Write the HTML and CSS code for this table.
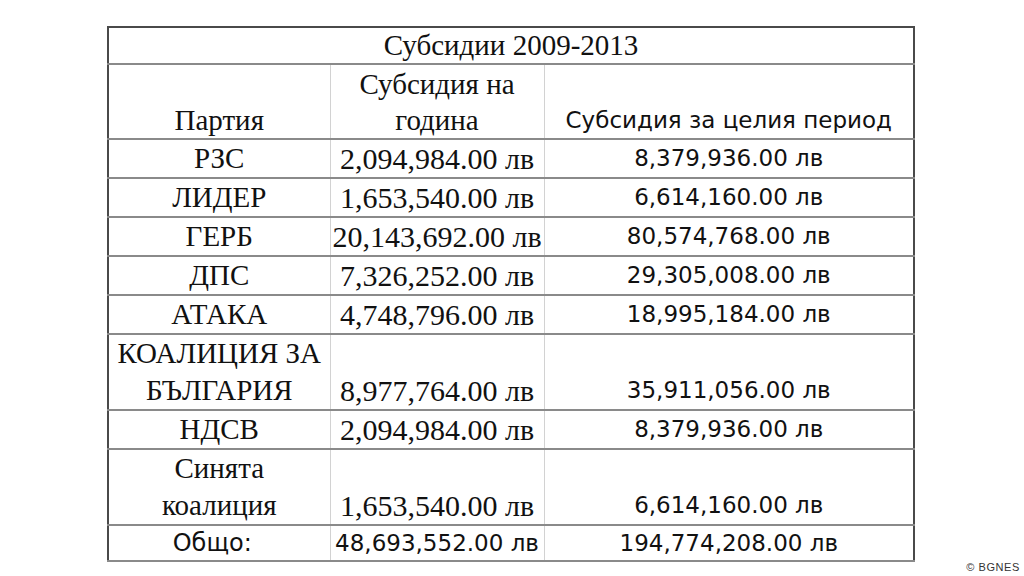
FILE: index.html
```html
<!DOCTYPE html>
<html lang="bg">
<head>
<meta charset="utf-8">
<title>Субсидии 2009-2013</title>
<link rel="stylesheet" href="styles.css">
</head>
<body>
<main class="page">
  <table class="subs">
    <colgroup>
      <col class="c1"><col class="c2"><col class="c3">
    </colgroup>
    <tr class="title-row"><td colspan="3" class="serif">Субсидии 2009-2013</td></tr>
    <tr class="header">
      <td class="serif">Партия</td>
      <td class="serif">Субсидия на<br>година</td>
      <td class="sans">Субсидия за целия период</td>
    </tr>
    <tr class="single"><td class="serif">РЗС</td><td class="serif num">2,094,984.00 лв</td><td class="sans">8,379,936.00 лв</td></tr>
    <tr class="single"><td class="serif">ЛИДЕР</td><td class="serif num">1,653,540.00 лв</td><td class="sans">6,614,160.00 лв</td></tr>
    <tr class="single"><td class="serif">ГЕРБ</td><td class="serif num">20,143,692.00 лв</td><td class="sans">80,574,768.00 лв</td></tr>
    <tr class="single"><td class="serif">ДПС</td><td class="serif num">7,326,252.00 лв</td><td class="sans">29,305,008.00 лв</td></tr>
    <tr class="single"><td class="serif">АТАКА</td><td class="serif num">4,748,796.00 лв</td><td class="sans">18,995,184.00 лв</td></tr>
    <tr class="double"><td class="serif">КОАЛИЦИЯ ЗА<br>БЪЛГАРИЯ</td><td class="serif num">8,977,764.00 лв</td><td class="sans">35,911,056.00 лв</td></tr>
    <tr class="single"><td class="serif">НДСВ</td><td class="serif num">2,094,984.00 лв</td><td class="sans">8,379,936.00 лв</td></tr>
    <tr class="double"><td class="serif">Синята<br>коалиция</td><td class="serif num">1,653,540.00 лв</td><td class="sans">6,614,160.00 лв</td></tr>
    <tr class="total"><td class="sans label">Общо:</td><td class="sans">48,693,552.00 лв</td><td class="sans">194,774,208.00 лв</td></tr>
  </table>
  <div class="credit">© BGNES</div>
</main>
</body>
</html>
```

FILE: styles.css
```css
html, body {
  margin: 0;
  padding: 0;
  background: #ffffff;
}

.page {
  position: relative;
  width: 1024px;
  height: 576px;
  box-sizing: border-box;
  padding: 26px 0 0 107px;
  overflow: hidden;
}

.subs {
  border-collapse: collapse;
  table-layout: fixed;
  width: 806px;
  border: 2px solid #4a4a4a;
  color: #111111;
}

.c1 { width: 222px; }
.c2 { width: 214px; }
.c3 { width: 370px; }

.subs td {
  padding: 0;
  text-align: center;
  vertical-align: bottom;
  white-space: nowrap;
  line-height: 37px;
  border-left: 1px solid #d2d2d2;
  border-right: 1px solid #d2d2d2;
  border-bottom: 2px solid #8a8a8a;
  overflow: visible;
}

.serif {
  font-family: "Liberation Serif", "Times New Roman", serif;
  font-size: 29px;
}

.serif.num {
  font-size: 30px;
}

.sans {
  font-family: "DejaVu Sans", Verdana, sans-serif;
  font-size: 23px;
}

.sans.label {
  font-size: 24px;
  padding-right: 14px;
}

.title-row td {
  height: 35px;
  line-height: 35px;
}

.header td {
  height: 73px;
  line-height: 36px;
}

.single td {
  height: 37px;
}

.double td {
  height: 73px;
  line-height: 37px;
}

.total td {
  height: 34px;
  line-height: 34px;
}

.credit {
  position: absolute;
  right: 4px;
  bottom: 3px;
  font-family: "Liberation Sans", Arial, sans-serif;
  font-size: 11px;
  letter-spacing: 0.6px;
  color: #333333;
}
```
